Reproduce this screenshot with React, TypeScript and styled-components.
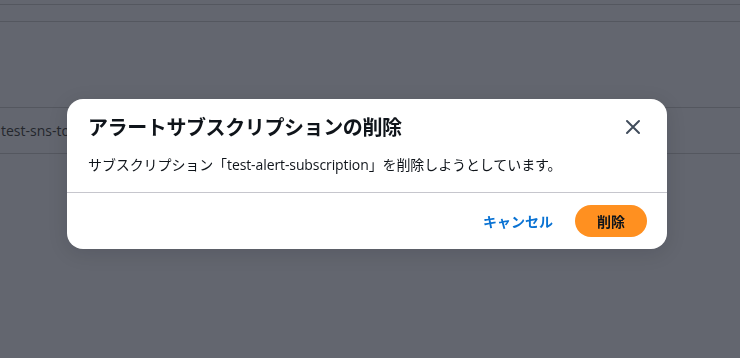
import React from "react"
import styled, { createGlobalStyle } from "styled-components"

const GlobalStyle = createGlobalStyle`
  html, body {
    margin: 0;
    padding: 0;
    background: #63666f;
    overflow: hidden;
  }
  body {
    font-family: "Open Sans", "Noto Sans CJK JP", sans-serif;
  }
`

const Page = styled.div`
  width: 740px;
  height: 358px;
  background: #63666f;
`

const TableRow = styled.div<{ height: number }>`
  height: ${(p) => p.height}px;
  border-bottom: 1px solid #54575f;
  display: flex;
  align-items: center;
  font-size: 14px;
  color: #24272d;
  padding-left: 1px;
`

const Overlay = styled.div`
  position: fixed;
  inset: 0;
  display: flex;
  justify-content: center;
  align-items: flex-start;
  padding: 99px 6px 0 0;
`

const Modal = styled.div`
  width: 600px;
  background: #ffffff;
  border-radius: 16px;
  box-shadow: 0 4px 20px rgba(0, 7, 22, 0.12);
  font-family: "Open Sans", "Noto Sans CJK JP", sans-serif;
  color: #0f141a;
`

const Header = styled.div`
  display: flex;
  align-items: center;
  justify-content: space-between;
  padding: 13px 22px 0 21px;
  height: 29px;
`

const Title = styled.h2`
  margin: 0;
  font-size: 20px;
  font-weight: 700;
  line-height: 28px;
  letter-spacing: -0.4px;
  font-family: "Noto Sans CJK JP", sans-serif;
`

const CloseButton = styled.button`
  border: none;
  background: none;
  padding: 0;
  width: 24px;
  height: 24px;
  display: flex;
  align-items: center;
  justify-content: center;
  color: #414d5c;
  cursor: pointer;
`

const Body = styled.div`
  padding: 13px 21px 16px;
  font-size: 14px;
  line-height: 22px;
  letter-spacing: -0.1px;
  border-bottom: 1px solid #c6c6cd;
`

const Footer = styled.div`
  display: flex;
  justify-content: flex-end;
  align-items: center;
  gap: 22px;
  padding: 12px 20px 12px;
`

const LinkButton = styled.button`
  border: none;
  background: none;
  padding: 0;
  font-family: "Noto Sans CJK JP", sans-serif;
  font-size: 14px;
  font-weight: 700;
  color: #0972d3;
  cursor: pointer;
`

const PrimaryButton = styled.button`
  border: none;
  border-radius: 16px;
  background: #ff9020;
  width: 72px;
  height: 32px;
  font-family: "Noto Sans CJK JP", sans-serif;
  font-size: 14px;
  font-weight: 700;
  color: #0f141a;
  cursor: pointer;
`

const CloseIcon = () => (
  <svg width="16" height="16" viewBox="0 0 16 16" fill="none">
    <path d="M2 2l12 12M14 2L2 14" stroke="currentColor" strokeWidth="2" strokeLinecap="round" />
  </svg>
)

const App = () => {
  return (
    <>
      <GlobalStyle />
      <Page>
        <TableRow height={4} />
        <TableRow height={16} />
        <TableRow height={85} />
        <TableRow height={45}>test-sns-topic</TableRow>
      </Page>
      <Overlay>
        <Modal>
          <Header>
            <Title>アラートサブスクリプションの削除</Title>
            <CloseButton aria-label="閉じる">
              <CloseIcon />
            </CloseButton>
          </Header>
          <Body>サブスクリプション「test-alert-subscription」を削除しようとしています。</Body>
          <Footer>
            <LinkButton>キャンセル</LinkButton>
            <PrimaryButton>削除</PrimaryButton>
          </Footer>
        </Modal>
      </Overlay>
    </>
  )
}

export default App
